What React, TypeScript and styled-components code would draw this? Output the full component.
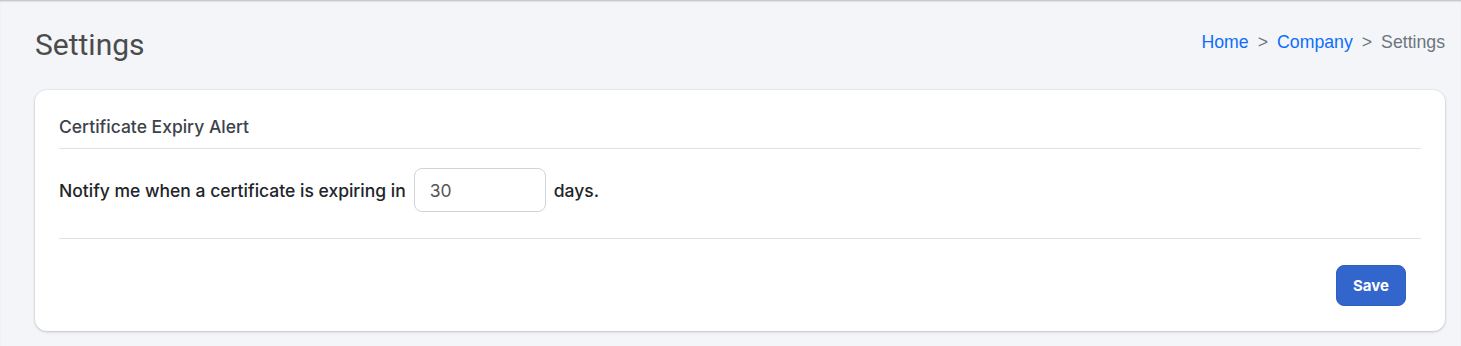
import React from "react";
import styled, { createGlobalStyle } from "styled-components";

const Global = createGlobalStyle`
  html, body { margin: 0; padding: 0; background: #f4f5f9; }
  body { font-family: Inter, "Noto Sans", sans-serif; }
`;

const Page = styled.div`
  min-height: 346px;
  box-sizing: border-box;
  padding: 0 16px 0 35px;
  box-shadow: inset 0 2px 2px -1px rgba(0, 0, 0, 0.25);
`;

const TopBar = styled.div`
  display: flex;
  align-items: center;
  justify-content: space-between;
  height: 90px;
`;

const Title = styled.h1`
  margin: 0;
  font-family: Roboto, sans-serif;
  font-weight: 400;
  font-size: 30px;
  color: #4b4b4b;
  line-height: 1;
`;

const Crumbs = styled.nav`
  display: flex;
  align-items: center;
  gap: 9px;
  font-family: "Liberation Sans", Arial, sans-serif;
  font-size: 17.7px;
  margin-top: -6px;
`;

const Crumb = styled.a<{ $active?: boolean }>`
  color: ${(p) => (p.$active ? "#6c757d" : "#0d6efd")};
  text-decoration: none;
`;

const Sep = styled.span`
  color: #6c757d;
`;

const Card = styled.section`
  background: #fff;
  border-radius: 12px;
  box-shadow: 0 1px 3px rgba(0, 0, 0, 0.18), 0 0 0 1px rgba(0, 0, 0, 0.04);
  padding: 0 24px 25px;
`;

const CardHeader = styled.div`
  padding: 25px 0 9px;
  border-bottom: 1px solid #dee2e6;
  font-size: 17.5px;
  font-weight: 500;
  line-height: 24px;
  color: #3d424b;
`;

const Body = styled.div`
  display: flex;
  align-items: center;
  gap: 8px;
  padding: 19px 0 26px;
  border-bottom: 1px solid #dee2e6;
  font-size: 17.5px;
  font-weight: 500;
  color: #212529;
`;

const NumberInput = styled.input`
  box-sizing: border-box;
  width: 132px;
  height: 44px;
  border: 1px solid #ced4da;
  border-radius: 8px;
  padding: 0 15px;
  font-family: Inter, sans-serif;
  font-size: 17.5px;
  color: #555;
  outline: none;
`;

const Footer = styled.div`
  display: flex;
  justify-content: flex-end;
  padding: 26px 15px 0 0;
`;

const SaveButton = styled.button`
  width: 70px;
  height: 41px;
  border: 1px solid #2f5fbf;
  border-radius: 8px;
  background: #3366cc;
  color: #fff;
  font-family: Inter, sans-serif;
  font-weight: 700;
  font-size: 15px;
  cursor: pointer;
`;

export default function App() {
  return (
    <>
      <Global />
      <Page>
        <TopBar>
          <Title>Settings</Title>
          <Crumbs>
            <Crumb href="#">Home</Crumb>
            <Sep>&gt;</Sep>
            <Crumb href="#">Company</Crumb>
            <Sep>&gt;</Sep>
            <Crumb $active>Settings</Crumb>
          </Crumbs>
        </TopBar>
        <Card>
          <CardHeader>Certificate Expiry Alert</CardHeader>
          <Body>
            <span>Notify me when a certificate is expiring in</span>
            <NumberInput type="text" defaultValue="30" />
            <span>days.</span>
          </Body>
          <Footer>
            <SaveButton>Save</SaveButton>
          </Footer>
        </Card>
      </Page>
    </>
  );
}
